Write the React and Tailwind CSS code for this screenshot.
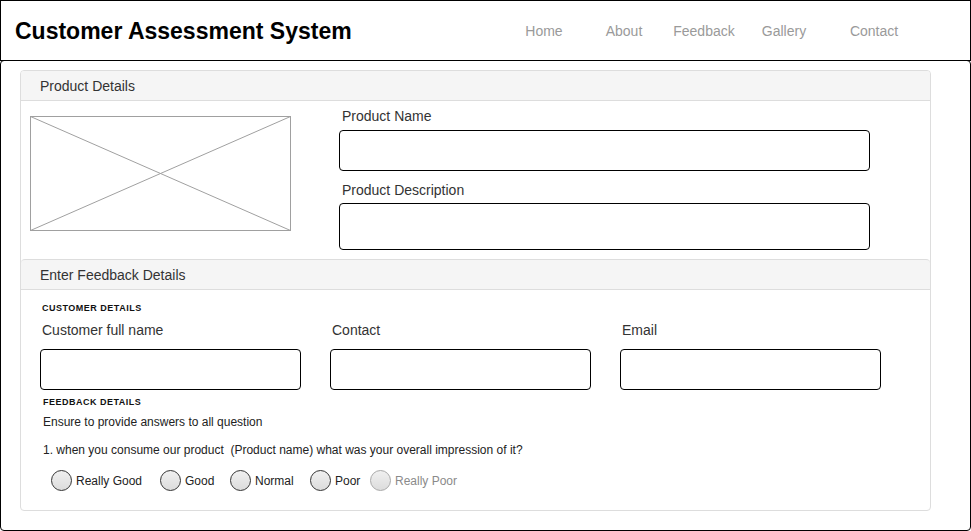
import React from "react";

const font = { fontFamily: '"Liberation Sans", Arial, sans-serif' };

function Radio({ label, w, disabled }) {
  return (
    <div className={`flex items-center gap-[4px] ${w}`}>
      <span
        className={`block w-[21px] h-[21px] rounded-full border bg-gradient-to-b from-[#f0f0f0] to-[#dcdcdc] ${
          disabled ? "border-[#a8a8a8]" : "border-[#333]"
        }`}
      />
      <span className={`text-[12px] leading-[16px] ${disabled ? "text-[#8a8a8a]" : "text-[#222]"}`}>{label}</span>
    </div>
  );
}

function Field({ label }) {
  return (
    <div className="flex flex-col w-[261px]">
      <div className="pl-[2px] text-[14px] leading-[20px] text-[#333]">{label}</div>
      <div className="mt-[9px] h-[41px] border border-black rounded-[4px] bg-white" />
    </div>
  );
}

export default function App() {
  return (
    <div className="w-[971px] h-[531px] bg-white overflow-hidden" style={font}>
      <header className="h-[61px] border border-black flex items-center pt-[2px]">
        <div className="pl-[14px] text-[23px] font-bold text-black leading-none">Customer Assessment System</div>
        <nav className="ml-auto mr-[46px] flex items-center text-[14px] text-[#9a9a9a]">
          <span className="w-[80px] text-center">Home</span>
          <span className="w-[80px] text-center">About</span>
          <span className="w-[80px] text-center">Feedback</span>
          <span className="w-[80px] text-center">Gallery</span>
          <span className="w-[100px] text-center">Contact</span>
        </nav>
      </header>

      <main className="-mt-px h-[471px] border border-black rounded-[4px] pl-[19px] pt-[9px]">
        <div className="w-[911px] h-[441px] border border-[#dddddd] rounded-[4px] flex flex-col overflow-hidden">
          <div className="h-[30px] bg-[#f5f5f5] border-b border-[#dddddd] flex items-center pt-[2px] pl-[19px] text-[14px] text-[#333]">
            Product Details
          </div>

          <div className="h-[158px] flex">
            <div className="ml-[9px] mt-[15px]">
              <svg width="261" height="115" viewBox="0 0 261 115">
                <rect x="0.5" y="0.5" width="260" height="114" fill="white" stroke="#a0a0a0" />
                <line x1="0.5" y1="0.5" x2="260.5" y2="114.5" stroke="#a0a0a0" />
                <line x1="260.5" y1="0.5" x2="0.5" y2="114.5" stroke="#a0a0a0" />
              </svg>
            </div>
            <div className="ml-[48px] pt-[5px] flex flex-col w-[531px]">
              <div className="pl-[3px] text-[14px] leading-[20px] text-[#333]">Product Name</div>
              <div className="mt-[4px] h-[41px] border border-black rounded-[4px]" />
              <div className="mt-[9px] pl-[3px] text-[14px] leading-[20px] text-[#333]">Product Description</div>
              <div className="mt-[3px] h-[47px] border border-black rounded-[4px]" />
            </div>
          </div>

          <div className="h-[31px] bg-[#f5f5f5] border-t border-b border-[#dddddd] rounded-t-[4px] flex items-center pt-[2px] pl-[19px] text-[14px] text-[#333]">
            Enter Feedback Details
          </div>

          <div className="flex-1 pl-[19px] flex flex-col">
            <div className="mt-[12px] pl-[2px] text-[9px] leading-[12px] font-bold text-[#111] tracking-[0.5px]">CUSTOMER DETAILS</div>
            <div className="mt-[6px] flex gap-[29px]">
              <Field label="Customer full name" />
              <Field label="Contact" />
              <Field label="Email" />
            </div>
            <div className="mt-[6px] pl-[3px] text-[9px] leading-[12px] font-bold text-[#111] tracking-[0.5px]">FEEDBACK DETAILS</div>
            <div className="mt-[6px] pl-[3px] text-[12px] leading-[16px] text-[#222]">Ensure to provide answers to all question</div>
            <div className="mt-[12px] pl-[3px] text-[12px] leading-[16px] text-[#222] whitespace-pre">
              1. when you consume our product  (Product name) what was your overall impression of it?
            </div>
            <div className="mt-[12px] pl-[11px] flex items-center">
              <Radio label="Really Good" w="w-[109px]" />
              <Radio label="Good" w="w-[70px]" />
              <Radio label="Normal" w="w-[80px]" />
              <Radio label="Poor" w="w-[60px]" />
              <Radio label="Really Poor" disabled />
            </div>
          </div>
        </div>
      </main>
    </div>
  );
}
